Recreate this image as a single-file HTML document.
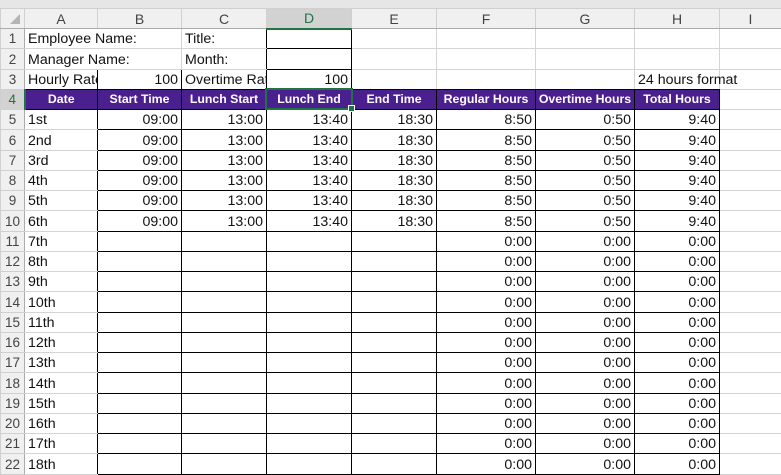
<!DOCTYPE html>
<html><head><meta charset="utf-8"><style>
*{box-sizing:border-box}
body{margin:0;width:781px;height:465px;overflow:hidden;background:#fff;position:relative;font-family:"Liberation Sans",sans-serif}
.top{position:absolute;left:0;top:0;width:781px;height:8px;background:#e6e6e6}
table{position:absolute;left:0;top:8px;border-collapse:collapse;table-layout:fixed;width:781px}
td{border:1px solid #d4d4d4;padding:0 3px;white-space:nowrap;overflow:hidden;font-size:14.2px;color:#111;height:20.25px;line-height:18px;vertical-align:bottom}
tr.ch td{height:20px;background:#f0f0f0;color:#444;text-align:center;font-size:14px;border-color:#d0d0d0;border-bottom:1px solid #ababab;vertical-align:middle}
td.rh{background:#f0f0f0;color:#444;text-align:center;font-size:13.5px;padding:0;border-color:#d0d0d0;border-right:1px solid #ababab}
.r{text-align:right}
.k{border-color:#000}
.br{border-right-color:#000}
.bb{border-bottom-color:#000}
td.h{background:#4a1f8e;color:#fff;font-weight:bold;font-size:12.3px;text-align:center;border-color:#000;vertical-align:middle;padding:0 1px}
tr.ch td.sel{background:#d2d2d2;color:#217346;border-bottom:2px solid #217346}
td.rh.sel{background:#d2d2d2;color:#217346;border-right:2px solid #217346}
.selbox{position:absolute;left:265px;top:88px;width:88px;height:22px;border:2px solid #217346}
.hdl{position:absolute;left:348px;top:105px;width:7px;height:7px;background:#217346;border:1px solid #fff}
.tri{position:absolute;left:10px;top:14px;width:0;height:0;border-left:10px solid transparent;border-bottom:10px solid #b4b4b4}
</style></head><body>
<div class="top"></div>
<table>
<colgroup><col style="width:24px"><col style="width:73px"><col style="width:84px"><col style="width:85px"><col style="width:85px"><col style="width:85px"><col style="width:99px"><col style="width:99px"><col style="width:85px"><col style="width:62px"></colgroup>
<tr class="ch"><td></td><td>A</td><td>B</td><td>C</td><td class="sel">D</td><td>E</td><td>F</td><td>G</td><td>H</td><td>I</td></tr>
<tr><td class="rh">1</td><td style="overflow:visible;border-right-color:transparent">Employee Name:</td><td></td><td class="br">Title:</td><td class="k"></td><td></td><td></td><td></td><td></td><td></td></tr>
<tr><td class="rh">2</td><td style="overflow:visible;border-right-color:transparent">Manager Name:</td><td></td><td class="br">Month:</td><td class="k"></td><td></td><td></td><td></td><td></td><td></td></tr>
<tr><td class="rh">3</td><td class="br bb">Hourly Rate</td><td class="r k">100</td><td class="k">Overtime Rate</td><td class="r k">100</td><td class="bb"></td><td class="bb"></td><td class="bb"></td><td class="bb" style="overflow:visible">24 hours format</td><td></td></tr>
<tr><td class="rh sel">4</td><td class="h">Date</td><td class="h">Start Time</td><td class="h">Lunch Start</td><td class="h">Lunch End</td><td class="h">End Time</td><td class="h">Regular Hours</td><td class="h">Overtime Hours</td><td class="h">Total Hours</td><td></td></tr>
<tr><td class="rh">5</td><td class="br">1st</td><td class="r k">09:00</td><td class="r k">13:00</td><td class="r k">13:40</td><td class="r k">18:30</td><td class="r k">8:50</td><td class="r k">0:50</td><td class="r k">9:40</td><td></td></tr>
<tr><td class="rh">6</td><td class="br">2nd</td><td class="r k">09:00</td><td class="r k">13:00</td><td class="r k">13:40</td><td class="r k">18:30</td><td class="r k">8:50</td><td class="r k">0:50</td><td class="r k">9:40</td><td></td></tr>
<tr><td class="rh">7</td><td class="br">3rd</td><td class="r k">09:00</td><td class="r k">13:00</td><td class="r k">13:40</td><td class="r k">18:30</td><td class="r k">8:50</td><td class="r k">0:50</td><td class="r k">9:40</td><td></td></tr>
<tr><td class="rh">8</td><td class="br">4th</td><td class="r k">09:00</td><td class="r k">13:00</td><td class="r k">13:40</td><td class="r k">18:30</td><td class="r k">8:50</td><td class="r k">0:50</td><td class="r k">9:40</td><td></td></tr>
<tr><td class="rh">9</td><td class="br">5th</td><td class="r k">09:00</td><td class="r k">13:00</td><td class="r k">13:40</td><td class="r k">18:30</td><td class="r k">8:50</td><td class="r k">0:50</td><td class="r k">9:40</td><td></td></tr>
<tr><td class="rh">10</td><td class="br">6th</td><td class="r k">09:00</td><td class="r k">13:00</td><td class="r k">13:40</td><td class="r k">18:30</td><td class="r k">8:50</td><td class="r k">0:50</td><td class="r k">9:40</td><td></td></tr>
<tr><td class="rh">11</td><td class="br">7th</td><td class="k"></td><td class="k"></td><td class="k"></td><td class="k"></td><td class="r k">0:00</td><td class="r k">0:00</td><td class="r k">0:00</td><td></td></tr>
<tr><td class="rh">12</td><td class="br">8th</td><td class="k"></td><td class="k"></td><td class="k"></td><td class="k"></td><td class="r k">0:00</td><td class="r k">0:00</td><td class="r k">0:00</td><td></td></tr>
<tr><td class="rh">13</td><td class="br">9th</td><td class="k"></td><td class="k"></td><td class="k"></td><td class="k"></td><td class="r k">0:00</td><td class="r k">0:00</td><td class="r k">0:00</td><td></td></tr>
<tr><td class="rh">14</td><td class="br">10th</td><td class="k"></td><td class="k"></td><td class="k"></td><td class="k"></td><td class="r k">0:00</td><td class="r k">0:00</td><td class="r k">0:00</td><td></td></tr>
<tr><td class="rh">15</td><td class="br">11th</td><td class="k"></td><td class="k"></td><td class="k"></td><td class="k"></td><td class="r k">0:00</td><td class="r k">0:00</td><td class="r k">0:00</td><td></td></tr>
<tr><td class="rh">16</td><td class="br">12th</td><td class="k"></td><td class="k"></td><td class="k"></td><td class="k"></td><td class="r k">0:00</td><td class="r k">0:00</td><td class="r k">0:00</td><td></td></tr>
<tr><td class="rh">17</td><td class="br">13th</td><td class="k"></td><td class="k"></td><td class="k"></td><td class="k"></td><td class="r k">0:00</td><td class="r k">0:00</td><td class="r k">0:00</td><td></td></tr>
<tr><td class="rh">18</td><td class="br">14th</td><td class="k"></td><td class="k"></td><td class="k"></td><td class="k"></td><td class="r k">0:00</td><td class="r k">0:00</td><td class="r k">0:00</td><td></td></tr>
<tr><td class="rh">19</td><td class="br">15th</td><td class="k"></td><td class="k"></td><td class="k"></td><td class="k"></td><td class="r k">0:00</td><td class="r k">0:00</td><td class="r k">0:00</td><td></td></tr>
<tr><td class="rh">20</td><td class="br">16th</td><td class="k"></td><td class="k"></td><td class="k"></td><td class="k"></td><td class="r k">0:00</td><td class="r k">0:00</td><td class="r k">0:00</td><td></td></tr>
<tr><td class="rh">21</td><td class="br">17th</td><td class="k"></td><td class="k"></td><td class="k"></td><td class="k"></td><td class="r k">0:00</td><td class="r k">0:00</td><td class="r k">0:00</td><td></td></tr>
<tr><td class="rh">22</td><td class="br">18th</td><td class="k"></td><td class="k"></td><td class="k"></td><td class="k"></td><td class="r k">0:00</td><td class="r k">0:00</td><td class="r k">0:00</td><td></td></tr>
</table>
<div class="tri"></div>
<div class="selbox"></div>
<div class="hdl"></div>
</body></html>
